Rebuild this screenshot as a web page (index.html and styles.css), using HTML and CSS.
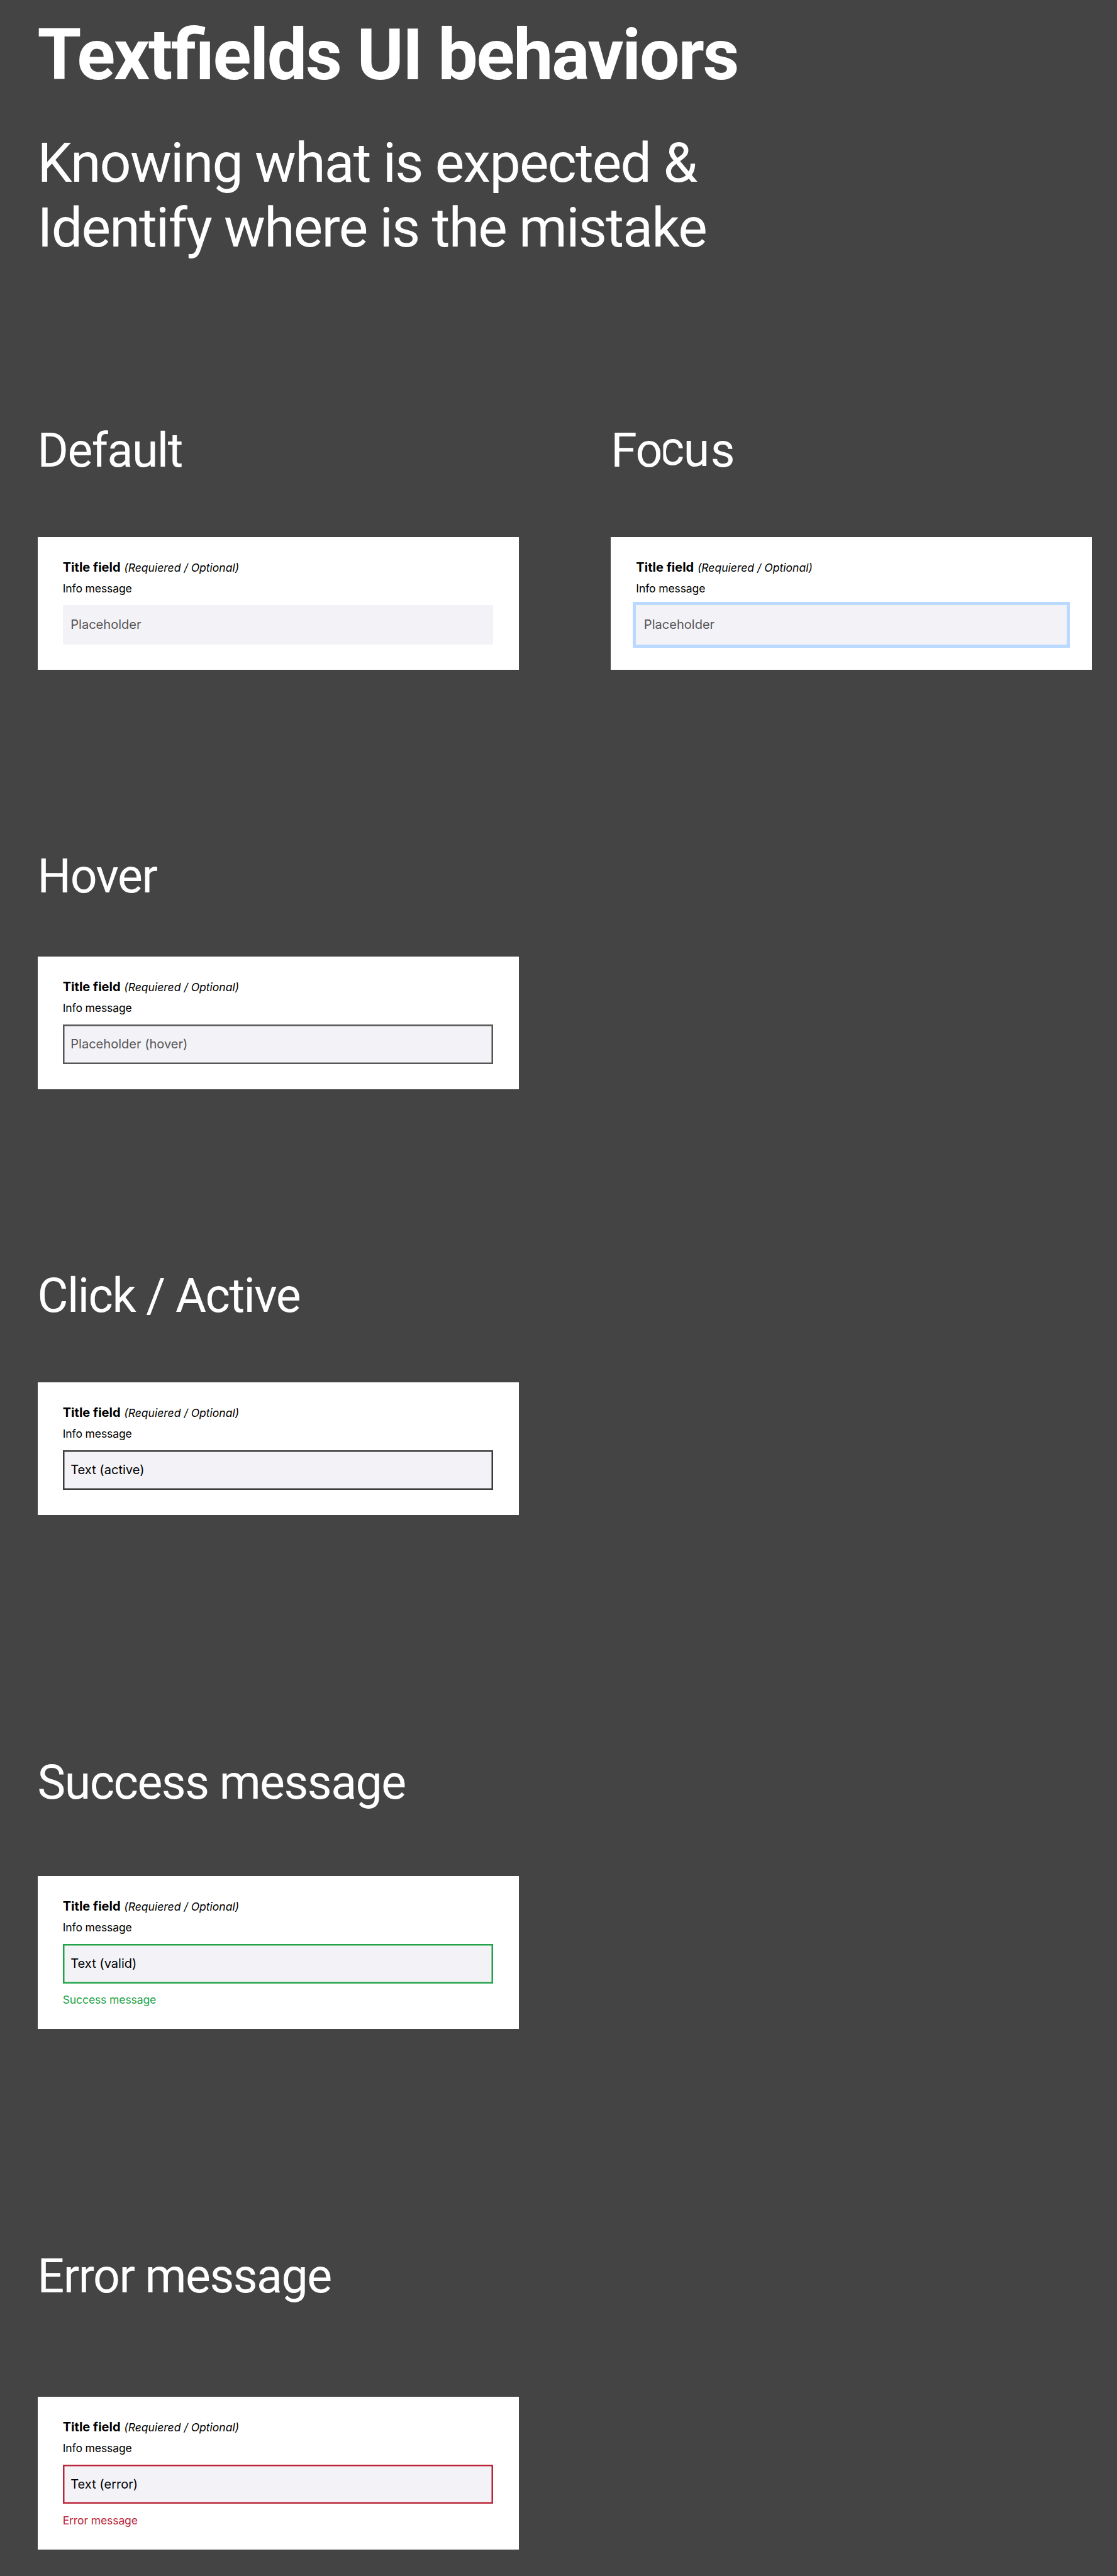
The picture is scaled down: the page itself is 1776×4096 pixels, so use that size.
FILE: index.html
```html
<!DOCTYPE html>
<html lang="en">
<head>
<meta charset="utf-8">
<title>Textfields UI behaviors</title>
<link rel="stylesheet" href="styles.css">
</head>
<body>
<main class="page">
  <header class="intro">
    <h1 class="title">Textfields UI behaviors</h1>
    <p class="subtitle">Knowing what is expected &amp;<br>Identify where is the mistake</p>
  </header>

  <div class="row row-first">
    <section class="state">
      <h2 class="heading">Default</h2>
      <div class="card">
        <div class="label"><strong>Title field</strong> <em>(Requiered / Optional)</em></div>
        <div class="info">Info message</div>
        <div class="field field-default">Placeholder</div>
      </div>
    </section>
    <section class="state">
      <h2 class="heading">Fo<span class="glyph-c">c</span><span class="glyph-u">u</span>s</h2>
      <div class="card">
        <div class="label"><strong>Title field</strong> <em>(Requiered / Optional)</em></div>
        <div class="info">Info message</div>
        <div class="field field-focus">Placeholder</div>
      </div>
    </section>
  </div>

  <section class="state state-hover">
    <h2 class="heading">Hover</h2>
    <div class="card">
      <div class="label"><strong>Title field</strong> <em>(Requiered / Optional)</em></div>
      <div class="info">Info message</div>
      <div class="field field-hover">Placeholder (hover)</div>
    </div>
  </section>

  <section class="state state-active">
    <h2 class="heading">Click / Active</h2>
    <div class="card">
      <div class="label"><strong>Title field</strong> <em>(Requiered / Optional)</em></div>
      <div class="info">Info message</div>
      <div class="field field-active">Text (active)</div>
    </div>
  </section>

  <section class="state state-success">
    <h2 class="heading">Success message</h2>
    <div class="card">
      <div class="label"><strong>Title field</strong> <em>(Requiered / Optional)</em></div>
      <div class="info">Info message</div>
      <div class="field field-valid">Text (valid)</div>
      <div class="message message-valid">Success message</div>
    </div>
  </section>

  <section class="state state-error">
    <h2 class="heading">Error message</h2>
    <div class="card">
      <div class="label"><strong>Title field</strong> <em>(Requiered / Optional)</em></div>
      <div class="info">Info message</div>
      <div class="field field-error">Text (error)</div>
      <div class="message message-error">Error message</div>
    </div>
  </section>
</main>
</body>
</html>
```
FILE: styles.css
```css
/* 1rem = 10 design units */
html {
  font-size: 6.27px;
}

* {
  box-sizing: border-box;
}

body {
  margin: 0;
  background: #444;
  font-family: Inter, sans-serif;
}

.page {
  height: 4096px;
  padding-left: 9.5rem;
  overflow: hidden;
}

.intro {
  height: 106.5rem;
  padding-top: 3.5rem;
  color: #fff;
  font-family: Roboto, sans-serif;
}

/* keeps the fi ligature on in spite of the letter spacing */
.title {
  margin: 0;
  font-size: 18rem;
  line-height: 21.1rem;
  font-weight: 700;
  letter-spacing: -0.02em;
  font-feature-settings: "liga" 1;
}

.subtitle {
  margin: 8.6rem 0 0;
  font-size: 14rem;
  line-height: 16.4rem;
  letter-spacing: -0.02em;
}

.row {
  display: flex;
  gap: 23.4rem;
}

.state {
  display: flex;
  flex-direction: column;
  justify-content: space-between;
  width: 122rem;
}

.row-first {
  height: 63.3rem;
}

.state-hover {
  margin-top: 44.7rem;
  height: 61.7rem;
}

.state-active {
  margin-top: 44.7rem;
  height: 63.3rem;
}

.state-success {
  margin-top: 60.1rem;
  height: 70.3rem;
}

.state-error {
  margin-top: 54.9rem;
  height: 77.1rem;
}

.heading {
  margin: 0;
  color: #fff;
  font-family: Roboto, sans-serif;
  font-size: 12rem;
  line-height: 15.6rem;
  font-weight: 400;
  letter-spacing: -0.02em;
}

.glyph-c,
.glyph-u {
  display: inline-block;
}

.glyph-c {
  transform: translate(-0.5rem, -0.4rem);
  clip-path: inset(0 -1rem 0 0.9rem);
}

.glyph-u {
  transform: translate(-0.5rem, -0.1rem);
}

.card {
  padding: 5.7rem 6.4rem 6.4rem;
  background: #fff;
  color: #000;
}

.label {
  height: 5.6rem;
  font-size: 3.2rem;
  line-height: 3.9rem;
}

.label em {
  font-size: 2.8rem;
}

.info {
  height: 5.9rem;
  font-size: 2.8rem;
  line-height: 3.4rem;
  letter-spacing: -0.007em;
}

.field {
  height: 10rem;
  padding-left: 2rem;
  background: #f3f2f7;
  color: #000;
  font-size: 3.2rem;
  line-height: 10.2rem;
}

.field-default,
.field-focus,
.field-hover {
  color: #555;
}

.field-focus {
  box-shadow: 0 0 0 0.8rem #b9d9ff;
}

.field-hover {
  box-shadow: inset 0 0 0 0.4rem #555;
}

.field-active {
  box-shadow: inset 0 0 0 0.4rem #3b3b3b;
}

.field-valid {
  box-shadow: inset 0 0 0 0.4rem #22a347;
}

.field-error {
  box-shadow: inset 0 0 0 0.4rem #ba2639;
}

.message {
  height: 5.2rem;
  padding-top: 2.5rem;
  font-size: 2.8rem;
  line-height: 3.4rem;
  letter-spacing: -0.007em;
}

.message-valid {
  color: #22a347;
}

.message-error {
  color: #ba2639;
}
```
